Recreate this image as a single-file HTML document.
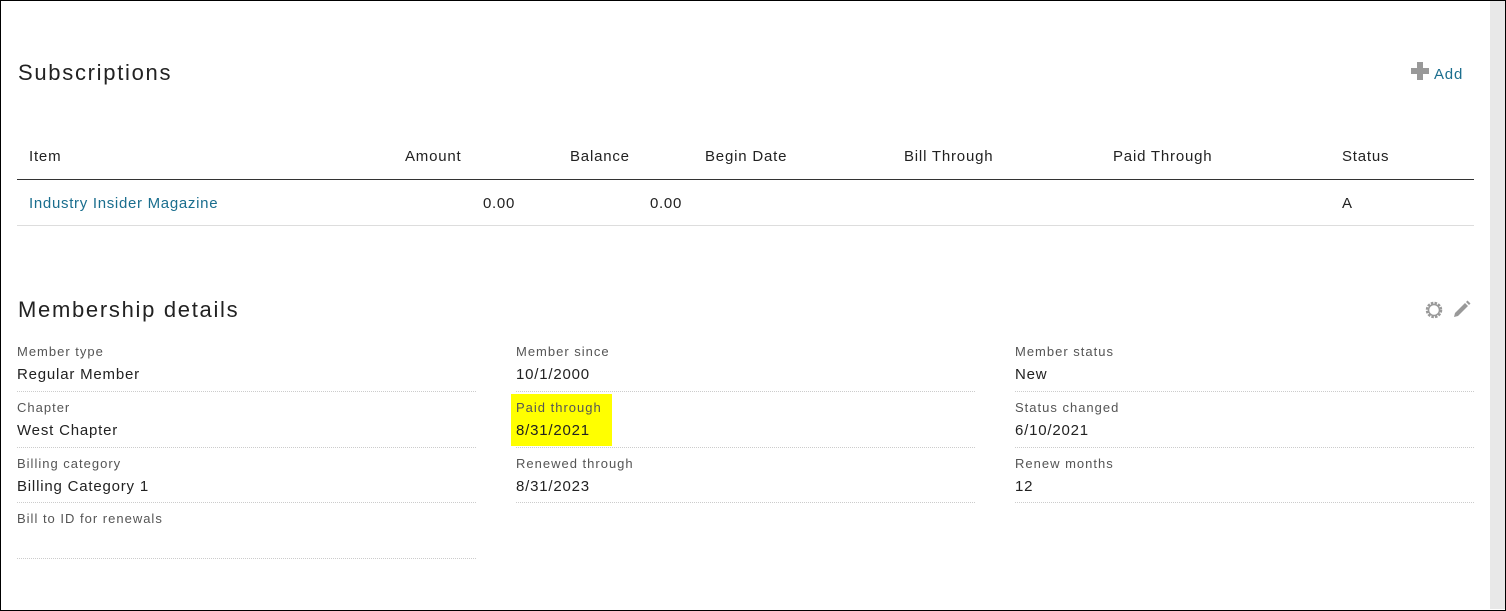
<!DOCTYPE html>
<html><head><style>
body{margin:0;width:1506px;height:611px;overflow:hidden;font-family:"Liberation Sans",sans-serif;color:#222;background:#fff}
.frame{position:absolute;left:0;top:0;width:1504px;height:609px;border:1px solid #000;background:#fff}
.strip{position:absolute;left:1490px;top:1px;width:15px;height:608px;background:#e8e8e8}
.abs{position:absolute;white-space:nowrap}
h2{position:absolute;margin:0;font-weight:normal;font-size:22px;color:#222;letter-spacing:1.7px}
.th{font-size:15px;top:148px;color:#222;letter-spacing:0.8px}
.td{font-size:15px;top:195px;letter-spacing:0.7px}
.lbl{font-size:13px;color:#555;letter-spacing:1px}
.val{font-size:15px;color:#222;letter-spacing:0.8px}
.dot{position:absolute;height:0;border-top:1px dotted #ccc;width:459px}
</style></head><body>
<div class="frame"></div>
<div class="strip"></div>
<h2 style="left:18px;top:60px">Subscriptions</h2>
<div class="abs" style="left:1411px;top:62px;width:18px;height:18px">
<div style="position:absolute;left:6px;top:0;width:6px;height:18px;background:#999"></div>
<div style="position:absolute;left:0;top:6px;width:18px;height:6px;background:#999"></div></div>
<div class="abs" style="left:1434px;top:66px;font-size:15px;color:#1a6e8e;letter-spacing:0.8px">Add</div>
<div class="abs th" style="left:29px">Item</div>
<div class="abs th" style="left:405px">Amount</div>
<div class="abs th" style="left:570px">Balance</div>
<div class="abs th" style="left:705px">Begin Date</div>
<div class="abs th" style="left:904px">Bill Through</div>
<div class="abs th" style="left:1113px">Paid Through</div>
<div class="abs th" style="left:1342px">Status</div>
<div class="abs" style="left:17px;top:179px;width:1457px;height:1px;background:#333"></div>
<div class="abs td" style="left:29px;color:#1a6e8e">Industry Insider Magazine</div>
<div class="abs td" style="left:483px">0.00</div>
<div class="abs td" style="left:650px">0.00</div>
<div class="abs td" style="left:1342px">A</div>
<div class="abs" style="left:17px;top:225px;width:1457px;height:1px;background:#ddd"></div>
<h2 style="left:18px;top:297px">Membership details</h2>
<svg class="abs" style="left:1424px;top:300px" width="20" height="20" viewBox="0 0 20 20"><circle cx="10" cy="10" r="7" fill="none" stroke="#999" stroke-width="2.5" stroke-dasharray="2.5 1.2"/><circle cx="10" cy="10" r="5.5" fill="none" stroke="#999" stroke-width="1.5"/></svg>
<svg class="abs" style="left:1451px;top:300px" width="20" height="20" viewBox="0 0 20 20"><path d="M3 17l1-4L14 3l3 3L7 16z" fill="#999"/><path d="M15 2l1.5-1.5 3 3L18 5z" fill="#999"/></svg>

<div class="abs" style="left:511px;top:394px;width:101px;height:52px;background:#ffff00"></div>

<div class="abs lbl" style="left:17px;top:344px">Member type</div><div class="abs val" style="left:17px;top:366px">Regular Member</div><div class="dot" style="left:17px;top:391px"></div>
<div class="abs lbl" style="left:17px;top:400px">Chapter</div><div class="abs val" style="left:17px;top:422px">West Chapter</div><div class="dot" style="left:17px;top:447px"></div>
<div class="abs lbl" style="left:17px;top:456px">Billing category</div><div class="abs val" style="left:17px;top:478px">Billing Category 1</div><div class="dot" style="left:17px;top:502px"></div>
<div class="abs lbl" style="left:17px;top:511px">Bill to ID for renewals</div><div class="dot" style="left:17px;top:558px"></div>

<div class="abs lbl" style="left:516px;top:344px">Member since</div><div class="abs val" style="left:516px;top:366px">10/1/2000</div><div class="dot" style="left:516px;top:391px"></div>
<div class="abs lbl" style="left:516px;top:400px">Paid through</div><div class="abs val" style="left:516px;top:422px">8/31/2021</div><div class="dot" style="left:516px;top:447px"></div>
<div class="abs lbl" style="left:516px;top:456px">Renewed through</div><div class="abs val" style="left:516px;top:478px">8/31/2023</div><div class="dot" style="left:516px;top:502px"></div>

<div class="abs lbl" style="left:1015px;top:344px">Member status</div><div class="abs val" style="left:1015px;top:366px">New</div><div class="dot" style="left:1015px;top:391px"></div>
<div class="abs lbl" style="left:1015px;top:400px">Status changed</div><div class="abs val" style="left:1015px;top:422px">6/10/2021</div><div class="dot" style="left:1015px;top:447px"></div>
<div class="abs lbl" style="left:1015px;top:456px">Renew months</div><div class="abs val" style="left:1015px;top:478px">12</div><div class="dot" style="left:1015px;top:502px"></div>
</body></html>
